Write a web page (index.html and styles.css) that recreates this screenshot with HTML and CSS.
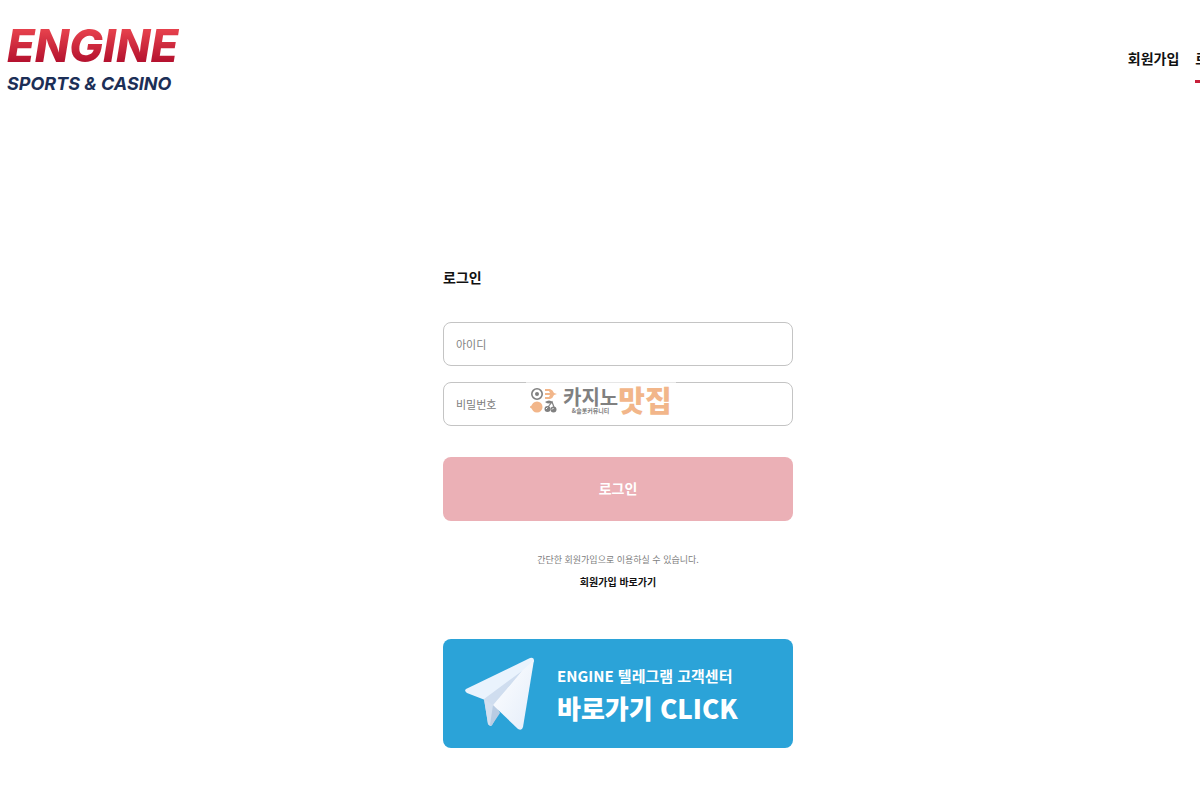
FILE: index.html
```html
<!DOCTYPE html>
<html lang="ko">
<head>
    <meta charset="UTF-8">
    <meta name="viewport" content="width=device-width, initial-scale=1.0">
    <title>ENGINE</title>
    <link rel="stylesheet" href="styles.css">
</head>
<body>
    <div class="page">
        <header class="header">
            <a class="logo" href="#">
                <span class="logo-name">ENGINE</span>
                <span class="logo-sub">SPORTS &amp; CASINO</span>
            </a>
            <nav class="nav">
                <a href="#">회원가입</a>
                <a class="active" href="#">로그인</a>
            </nav>
        </header>

        <main class="login">
            <h1>로그인</h1>
            <form>
                <div class="field">
                    <input type="text" id="userid" placeholder="아이디" aria-label="아이디">
                </div>
                <div class="field">
                    <input type="password" id="userpw" placeholder="비밀번호" aria-label="비밀번호">
                    <div class="mark">
                        <svg class="mark-icon" width="28" height="26" viewBox="0 0 28 26" aria-hidden="true">
                            <circle cx="7" cy="6" r="5.200" fill="none" stroke="#808080" stroke-width="1.6"/>
                            <circle cx="7" cy="6" r="2" fill="#808080"/>
                            <path d="M15 1h5q3 1 4 4l3 1-3 1q-1 3-4 4h-5v-2h4l1-2h-5V5h5l-1-2h-4z" fill="#f2b68a"/>
                            <circle cx="7" cy="19" r="5.500" fill="#f2b68a"/>
                            <path d="M-1 19l5-3v6z" fill="#f2b68a"/>
                            <path d="M18 19l4-5 2 5" fill="none" stroke="#808080" stroke-width="1.200"/>
                            <path d="M15 14q4-3 8 0-4 3-8 0z" fill="#808080"/>
                            <circle cx="17.500" cy="21" r="3" fill="#808080"/>
                            <circle cx="23.500" cy="21.500" r="3" fill="#808080"/>
                            <path d="M16 21l1.500-1.500M22 21.500l1.500-1.500" stroke="#fff"/>
                        </svg>
                        <div class="mark-text">
                            <span class="mark-name">카지노</span>
                            <span class="mark-sub">&amp;슬롯커뮤니티</span>
                        </div>
                        <span class="mark-accent">맛집</span>
                    </div>
                </div>
                <button class="btn" type="submit">로그인</button>
            </form>

            <div class="join">
                <p>간단한 회원가입으로 이용하실 수 있습니다.</p>
                <a href="#">회원가입 바로가기</a>
            </div>

            <a class="telegram" href="#">
                <svg width="72" height="76" viewBox="0 0 72 76" aria-hidden="true">
                    <defs>
                        <linearGradient id="wing" x1="0" y1="0" x2="1" y2="1">
                            <stop offset="0" stop-color="#fff"/>
                            <stop offset="1" stop-color="#e4edfa"/>
                        </linearGradient>
                    </defs>
                    <path d="M2 33L66 2q4-1 4 3L57 22 21 44 3 37q-3-2-1-4z" fill="#eaf3fd"/>
                    <path d="M20 43L58 15 30 49 28 69q-2 2-4-1z" fill="#cfddef"/>
                    <path d="M20 43l9 6 6 7-7 13q-2 2-4-1z" fill="#d3e0f0"/>
                    <path d="M58 15L29 49l-3 20q1 1 2 0l8-12-4-8z" fill="#b9cce3"/>
                    <path d="M70 4l-11 67q-1 4-5 2L29 49 58 15z" fill="url(#wing)"/>
                </svg>
                <span class="telegram-text">
                    <span>ENGINE 텔레그램 고객센터</span>
                    <strong>바로가기 CLICK</strong>
                </span>
            </a>
        </main>
    </div>
</body>
</html>
```
FILE: styles.css
```css
* {
    box-sizing: border-box;
}
html {
    overflow-x: hidden;
}
body {
    margin: 0;
    overflow-x: hidden;
    background-color: #fff;
    color: #111;
    font-family: "Noto Sans CJK KR", sans-serif;
}
a {
    color: inherit;
    text-decoration: none;
}
/* content runs a little past the right edge of the window */
.page {
    width: calc(100% + 36px);
}
.header {
    display: flex;
    justify-content: space-between;
    align-items: flex-start;
    padding: 24px 0 0 7px;
}
.logo {
    display: flex;
    flex-direction: column;
    font-family: Inter, sans-serif;
    font-style: italic;
    white-space: nowrap;
}
.logo-name {
    padding-right: 8px;
    font-size: 45px;
    line-height: 44px;
    font-weight: 800;
    color: transparent;
    background: linear-gradient(#e5404c 15%, #b5122f 85%);
    -webkit-background-clip: text;
    background-clip: text;
}
.logo-sub {
    font-size: 18px;
    line-height: 32px;
    font-weight: 700;
    color: #1c2f57;
}
.nav {
    display: flex;
    gap: 16px;
    padding: 18px 2px 0 0;
    font-size: 14px;
    line-height: 32px;
    font-weight: 700;
}
.nav a {
    padding-bottom: 6px;
    border-bottom: 3px solid transparent;
}
.nav .active {
    border-color: #c8203a;
}
.login {
    width: 350px;
    max-width: 100%;
    margin: 0 auto;
    padding: 165px 0 52px;
}
.login h1 {
    margin: 0 0 33px;
    font-size: 14px;
    line-height: 24px;
}
.field {
    position: relative;
    margin-bottom: 16px;
}
.field input {
    display: block;
    width: 100%;
    height: 44px;
    padding: 0 12px;
    border: 1px solid #c4c4c4;
    border-radius: 8px;
    font: 11px "Noto Sans CJK KR", sans-serif;
}
.field input::placeholder {
    color: #808080;
}
.mark {
    position: absolute;
    top: 0;
    left: 83px;
    display: flex;
    align-items: center;
    height: 38px;
    padding: 0 4px;
    background-color: rgba(255, 255, 255, 0.6);
    color: #808080;
    font-weight: 700;
    white-space: nowrap;
    pointer-events: none;
}
.mark-icon {
    margin-right: 5px;
}
.mark-text {
    display: flex;
    flex-direction: column;
    align-items: center;
}
.mark-name {
    font-size: 20px;
    line-height: 20px;
}
.mark-sub {
    font-size: 6px;
    line-height: 8px;
}
.mark-accent {
    font-size: 29px;
    line-height: 32px;
    padding-bottom: 4px;
    font-weight: 900;
    color: #f2b68a;
}
.btn {
    display: block;
    width: 100%;
    height: 64px;
    margin-top: 31px;
    padding: 0 0 2px;
    border: 0;
    border-radius: 8px;
    background-color: #ebb0b6;
    color: #fff;
    font: 700 14px "Noto Sans CJK KR", sans-serif;
    cursor: pointer;
}
.join {
    padding: 28px 0 46px;
    text-align: center;
    font-size: 10px;
    line-height: 22px;
}
.join p {
    margin: 0;
    font-size: 9px;
    color: #808080;
}
.join a {
    display: block;
    font-weight: 700;
}
.telegram {
    display: flex;
    align-items: center;
    gap: 21px;
    height: 109px;
    padding-left: 21px;
    border-radius: 8px;
    background-color: #2ba3d8;
    color: #fff;
    font-weight: 700;
    white-space: nowrap;
}
.telegram-text {
    display: flex;
    flex-direction: column;
    font-size: 15px;
    line-height: 28px;
}
.telegram-text strong {
    font-size: 26px;
    line-height: 36px;
}
```
